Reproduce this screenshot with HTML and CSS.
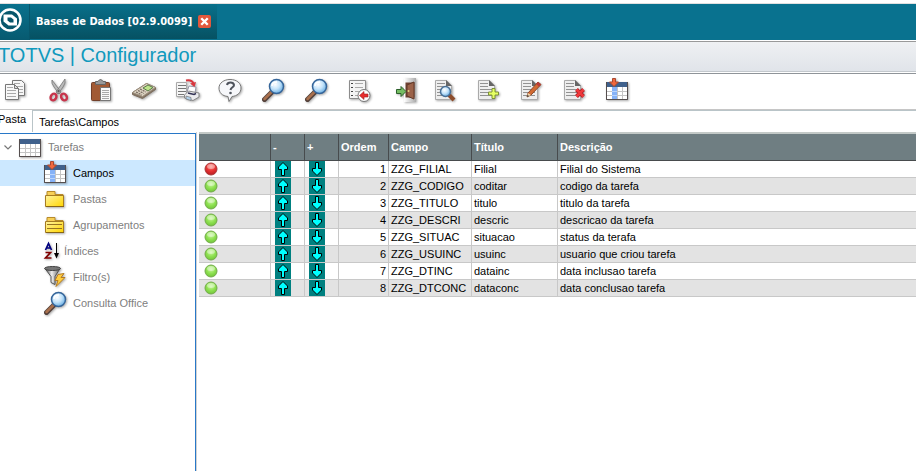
FILE: index.html
```html
<!DOCTYPE html>
<html lang="pt-BR">
<head>
<meta charset="utf-8">
<title>TOTVS | Configurador</title>
<link rel="stylesheet" href="styles.css">
</head>
<body>
<svg class="defs" aria-hidden="true">
  <defs>
    <radialGradient id="lens" cx=".4" cy=".35" r=".7"><stop offset="0" stop-color="#fff"/><stop offset=".5" stop-color="#c3e3fa"/><stop offset="1" stop-color="#5ea7df"/></radialGradient>
    <radialGradient id="red" cx=".5" cy=".3" r=".7"><stop offset="0" stop-color="#f98a80"/><stop offset=".5" stop-color="#ea3535"/><stop offset="1" stop-color="#b81d22"/></radialGradient>
    <radialGradient id="green" cx=".5" cy=".35" r=".7"><stop offset="0" stop-color="#c9f5a0"/><stop offset=".5" stop-color="#8fe252"/><stop offset="1" stop-color="#6cc036"/></radialGradient>
    <linearGradient id="fold" x2="1" y2="1"><stop offset="0" stop-color="#fff3a0"/><stop offset="1" stop-color="#ffd500"/></linearGradient>
    <linearGradient id="fade"><stop offset="0" stop-color="#fff"/><stop offset="1" stop-color="#aaa"/></linearGradient>
    <linearGradient id="metal"><stop offset="0" stop-color="#444"/><stop offset=".45" stop-color="#eee"/><stop offset="1" stop-color="#555"/></linearGradient>
    <symbol id="doc" viewBox="0 0 24 24"><path d="M2.5 2.5h11l5 5v14h-16z" fill="#eee" stroke="#aaa"/><path d="M13 2v6h6z" fill="#666"/><path d="M4 5.500h8M4 8.500h8M4 11.500h12M4 14.500h12M4 17.500h12" stroke="#929292"/></symbol>
    <symbol id="glass" viewBox="0 0 24 24"><path d="M3.500 21.500 11 14" stroke="#54413b" stroke-width="5" stroke-linecap="round"/><path d="M3.500 21 10.500 14" stroke="#a9704d" stroke-width="2.500" stroke-linecap="round"/><circle cx="15.500" cy="8.500" r="7" fill="url(#lens)" stroke="#35659a" stroke-width="1.500"/><path d="M11 8q0-4 5-4" fill="none" stroke="#fff" stroke-width="1.500"/></symbol>
    <symbol id="grid" viewBox="0 0 24 24"><path d="M1.500 4.500h21v17h-21z" fill="#fff" stroke="#615b5b"/><path d="M1 4h22v5H1z" fill="#40618c"/><path d="M2 13.500h20M2 17.500h20M7.500 9v12M12.500 9v12M17.500 9v12" stroke="#c4c4c4"/><path d="M1.500 4v17.500h21V4" fill="none" stroke="#554e4e"/></symbol>
    <symbol id="fields" viewBox="0 0 24 24"><use href="#grid"/><path d="M7 9h5v12H7z" fill="#86b2f7"/><path d="M7 13.500h5M7 17.500h5" stroke="#b9d5ff"/><path d="M7.500.5h3V4h3L9 8.500 4.500 4h3z" fill="#f1683d" stroke="#a94a32"/></symbol>
    <symbol id="folder" viewBox="0 0 24 24"><path d="M4 8.500v-4h8v3h8v3" fill="#f7cf57" stroke="#b88b2b"/><path d="M2.500 8.500h18v11h-18z" fill="url(#fold)" stroke="#a67c22"/><path d="M3 19.500h18" stroke="#886514"/></symbol>
    <symbol id="arrow" viewBox="0 0 16 16"><path d="M8 1.500 12.500 6v2.500h-3v6h-3v-6h-3V6z" fill="#0ff" stroke="#000"/></symbol>
    <symbol id="ball" viewBox="0 0 14 14"><ellipse cx="7" cy="4.500" rx="4" ry="2.500" fill="#fff" opacity=".4"/></symbol>
  </defs>
</svg>

<header class="topbar">
  <div class="brand"><svg class="logo" viewBox="0 0 24 24"><circle cx="12" cy="12" r="10.500" fill="#07566b" stroke="#fff" stroke-width="2.500"/><path d="M5.500 6.500h8.500l5 4v7h-8.500l-5-4z" fill="#fff"/><path d="M9.500 9.500H13l2.500 2v3H12l-2.500-2z" fill="#07556a"/></svg></div>
  <div class="tab"><span>Bases de Dados [02.9.0099]</span>
    <button class="close" aria-label="Fechar"><svg viewBox="0 0 12 12"><path d="m3 3 6 6m0-6-6 6" stroke="#fff" stroke-width="2.200"/></svg></button>
  </div>
</header>
<h1 class="title">TOTVS | Configurador</h1>

<nav class="toolbar" aria-label="Ferramentas">
  <button aria-label="Copiar"><svg viewBox="0 0 24 24"><path d="M9.500 2.500h9l3 3v12h-12z" fill="#f7f7f7" stroke="#777"/><path d="M11 5.500h6M11 8.500h9M11 11.500h9M11 14.500h9" stroke="#aaa"/><path d="M2.500 6.500h9l4 4v11h-13z" fill="#f8f8f8" stroke="#777"/><path d="M4 9.500h6M4 12.500h9M4 15.500h9M4 18.500h9" stroke="#aaa"/><path d="M11.500 6.500v4h4z" fill="#ddd" stroke="#777"/></svg></button>
  <button aria-label="Recortar"><svg viewBox="0 0 24 24"><path d="M6 2q-1 3 2 7l5 7 2-2zM19 1q1 4-2 8l-5 7-2-2z" fill="#bbb" stroke="#777" stroke-width=".8"/><circle cx="12.500" cy="13" r="1" fill="#555"/><g fill="none" stroke="#c8344b" stroke-width="2.500"><ellipse cx="7.500" cy="19" rx="2.700" ry="3.500" transform="rotate(30 7.500 19)"/><ellipse cx="18" cy="19" rx="2.700" ry="3.500" transform="rotate(-30 18 19)"/></g></svg></button>
  <button aria-label="Colar"><svg viewBox="0 0 24 24"><rect x="2.500" y="4.500" width="18" height="18" rx="1" fill="#a15a34" stroke="#72402a"/><path d="M6.500 6.500v-3H9q2.500-4 5 0h2.500v3z" fill="#999" stroke="#666"/><path d="M11.500 9.500h10v13h-10z" fill="#fafafa" stroke="#777"/><path d="M13 12.500h7M13 14.500h7M13 16.500h7M13 18.500h7M13 20.500h7" stroke="#aaa"/></svg></button>
  <button aria-label="Calculadora"><svg viewBox="0 0 24 24"><path d="m.5 14.500 14-9 9 4v2l-13 9-10-4z" fill="#857665" stroke="#7c6c5c"/><path d="m.5 14.500 14-9 9 4-13 9z" fill="#ddd3c2" stroke="#9b8e7d"/><path d="m11 10 5-3 5 2.500-5 3.500z" fill="#bee48b" stroke="#587a47"/><path d="m4 14 6 3M6 12.500l6 3M8 11l6 3" stroke="#776b60" stroke-width="1.200" stroke-dasharray="2 1"/></svg></button>
  <button aria-label="Imprimir"><svg viewBox="0 0 24 24"><path d="M1.500 4.500h10v14h-10z" fill="#f5f5f5" stroke="#aaa"/><path d="M3 7.500h8M3 10.500h8M3 13.500h8M3 16.500h6" stroke="#777"/><path d="m12 14 2-6 7 1-1 6z" fill="#fff" stroke="#99a"/><path d="m9.500 17 4-4 10.500 2v4l-6 3.500-8.500-2.500z" fill="#ececef" stroke="#888"/><path d="m13 15 6 1.500 2-1" stroke="#335" stroke-width="1.500" fill="none"/><path d="m11 18 5 1.500v3l-5-1.500z" fill="#b4d4ee" stroke="#777" stroke-width=".7"/><path d="M11 2.500q6-1 7.500 3" fill="none" stroke="#d9373f" stroke-width="2"/><path d="M15 5.500 21 4l-1.500 5z" fill="#d9373f"/></svg></button>
  <button aria-label="Ajuda"><svg viewBox="0 0 24 24"><path d="M12 1.500c7 0 11 4 11 8.500 0 5-4 8-9 8.500l-3 5-1-5C4 18 1 14.500 1 10c0-5 5-8.500 11-8.500z" fill="#f6f7fa" stroke="#777"/><path d="M9 7q.500-2.500 3.500-2.500T16 7c0 2.500-3 2-3.500 5" fill="none" stroke="#4e535c" stroke-width="2"/><circle cx="12.500" cy="15" r="1.300" fill="#4e535c"/></svg></button>
  <button aria-label="Pesquisar"><svg><use href="#glass"/></svg></button>
  <button aria-label="Localizar"><svg><use href="#glass"/></svg></button>
  <button aria-label="Voltar"><svg viewBox="0 0 24 24"><path d="M2.500 2.500h16v18h-16z" fill="#f4f4f4" stroke="#8c8c8c"/><path d="M4 5.500h2M4 9.500h2M4 13.500h2M4 17.500h2" stroke="#444"/><path d="M8 5.500h8M8 9.500h8M8 13.500h5M8 17.500h3" stroke="#aaa"/><circle cx="17" cy="17.500" r="6" fill="#fff" stroke="#777"/><path d="m12.500 17.500 4.500-4v2.500h4v3h-4v2.500z" fill="#e82d2d" stroke="#9c2023" stroke-width=".6"/></svg></button>
  <button aria-label="Sair"><svg viewBox="0 0 24 24"><path d="M14 0h12v24H14z" fill="url(#fade)"/><path d="M15.500 4.500h9v15h-9z" fill="#6e4132"/><path d="m17 7 7-3v17l-7-3z" fill="#9b6249" stroke="#613828"/><circle cx="18.500" cy="13" r="1" fill="#e6d282"/><path d="M6.500 11.500H11v-3l5 5-5 5v-3H6.500z" fill="#75bd63" stroke="#2c602b"/></svg></button>
  <button aria-label="Visualizar"><svg viewBox="0 0 24 24"><use href="#doc"/><path d="m16 17 5 5" stroke="#8d4d2c" stroke-width="4"/><circle cx="12.500" cy="13.500" r="5" fill="url(#lens)" stroke="#486f96" stroke-width="1.500"/></svg></button>
  <button aria-label="Incluir"><svg viewBox="0 0 24 24"><use href="#doc"/><path d="M16 10.500h3v3.500h3.500v3H19v3.500h-3V17h-3.500v-3H16z" fill="#e5ff63" stroke="#7d9138"/></svg></button>
  <button aria-label="Alterar"><svg viewBox="0 0 24 24"><use href="#doc"/><path d="m8 19 1-4L19 4l3 2.500L12 17z" fill="#d26a32" stroke="#8e4929"/><path d="m8 19 1-4 3 2z" fill="#efd6ad"/><path d="m17 6 3 2.500 2-2L19 4z" fill="#bd3b39"/><path d="m8 19 .5-2 1.500 1z" fill="#222"/></svg></button>
  <button aria-label="Excluir"><svg viewBox="0 0 24 24"><use href="#doc"/><path d="m14.500 11.500 7 7m0-7-7 7" stroke="#a51e22" stroke-width="4"/><path d="m14.500 11.500 7 7m0-7-7 7" stroke="#f0383b" stroke-width="2.500"/></svg></button>
  <button aria-label="Campos"><svg><use href="#fields"/></svg></button>
</nav>

<div class="path">
  <label for="pasta">Pasta</label>
  <input id="pasta" value="Tarefas\Campos">
</div>

<main class="work">
  <nav class="tree" aria-label="Pastas">
    <a class="root" href="#tarefas"><svg class="chevron" viewBox="0 0 8 8"><path d="m.5 2.500 3.500 3.500L7.500 2.500" fill="none" stroke="#777" stroke-width="1.200"/></svg><svg class="icon"><use href="#grid"/></svg><span>Tarefas</span></a>
    <a class="selected" href="#campos"><svg class="icon"><use href="#fields"/></svg><span>Campos</span></a>
    <a href="#pastas"><svg class="icon"><use href="#folder"/></svg><span>Pastas</span></a>
    <a href="#agrupamentos"><svg class="icon" viewBox="0 0 24 24"><use href="#folder"/><path d="M4 11.500h15M4 15.500h15" stroke="#987322"/></svg><span>Agrupamentos</span></a>
    <a href="#indices"><svg class="icon small" viewBox="0 0 16 24"><g fill="none" stroke-width="1.700"><path d="m2.500 11 3-6.500 3 6.500M3.500 9h4" stroke="#000080"/><path d="M2.500 13.500h5l-5 5.500H8.500" stroke="#800000"/></g><path d="M13.500 4v14" stroke="#000"/><path d="M11 14h5l-2.500 5.500z"/></svg><span>Índices</span></a>
    <a href="#filtros"><svg class="icon" viewBox="0 0 24 24"><path d="m2 3.500 6 8v6l4 2v-8l5-8z" fill="url(#metal)" stroke="#555"/><ellipse cx="9.500" cy="3.500" rx="8" ry="2" fill="#777" stroke="#444"/><path d="m15 9.500 6-1-3 4h4l-9 9 2-6h-3z" fill="#ffcd3e" stroke="#b37a20"/></svg><span>Filtro(s)</span></a>
    <a href="#consulta"><svg class="icon"><use href="#glass"/></svg><span>Consulta Office</span></a>
  </nav>
  <section class="content">
    <table>
      <colgroup><col class="c-status"><col class="c-move"><col class="c-move"><col class="c-order"><col class="c-field"><col class="c-title"><col></colgroup>
      <thead><tr><th aria-label="Status"></th><th>-</th><th>+</th><th>Ordem</th><th>Campo</th><th>Título</th><th>Descrição</th></tr></thead>
      <tbody id="rows"></tbody>
    </table>
  </section>
</main>
<script src="app.js"></script>
</body>
</html>
```
FILE: styles.css
```css
* { box-sizing: border-box; }
body {
  margin: 0;
  min-height: 100vh;
  display: flex;
  flex-direction: column;
  overflow: hidden;
  background: #fff;
  color: #000;
  font: 11px/16px "Liberation Sans", Arial, sans-serif;
}
.defs { position: absolute; width: 0; height: 0; }
svg { display: block; overflow: visible; }
button { padding: 0; border: 0; background: none; font: inherit; }

.topbar {
  display: flex;
  height: 37px;
  margin-top: 3px;
  border-top: 1px solid #e0e0e0;
  background: #09728f;
}
.brand {
  width: 30px;
  border-right: 1px solid #07566b;
  background: linear-gradient(#09718d, #075a70);
}
.logo { width: 24px; height: 24px; margin: 4px 0 0 -2px; }
.tab {
  display: flex;
  align-items: center;
  gap: 6px;
  height: 35px;
  padding: 0 6px;
  background: linear-gradient(#08708b, #065162);
  color: #fff;
  font: bold 11px/16px "DejaVu Sans Condensed", Verdana, sans-serif;
}
.close {
  width: 13px;
  height: 13px;
  border-radius: 2px;
  background: #e2583c;
}
.title {
  height: 34px;
  margin: 0;
  border-top: 1px solid #fff;
  border-bottom: 1px solid #8f9499;
  box-shadow: inset 0 1px #999, inset 0 -1px #fff, inset 0 -2px #c3c8cd;
  background: linear-gradient(#eff1f3, #dfe3e9);
  color: #1199bd;
  font: 20px/28px "Liberation Sans", Arial, sans-serif;
  text-indent: -2px;
}

.toolbar {
  display: flex;
  gap: 19px;
  height: 36px;
  padding: 4px 3px;
  border-bottom: 1px solid #c6c6c6;
}
.toolbar button, .toolbar svg, .icon { width: 24px; height: 24px; }
.toolbar svg, .icon { filter: drop-shadow(1px 1px 1px #0005); }

.path { display: flex; height: 22px; }
.path label { width: 34px; margin-left: -2px; padding-top: 1px; }
.path input {
  flex: 1;
  min-width: 0;
  padding: 0 6px;
  border: solid #b9c4c8;
  border-width: 1px 0 0 1px;
  background: #fff;
  color: #000;
  font: inherit;
}

.work { display: flex; flex: 1; }
.tree {
  width: 196px;
  flex: none;
  margin-top: 1px;
  border: solid #2878c8;
  border-width: 1px 1px 0 0;
}
.tree a {
  display: flex;
  align-items: center;
  gap: 6px;
  height: 26px;
  padding-left: 43px;
  color: #808080;
  text-decoration: none;
}
.tree .root { padding-left: 4px; }
.tree .selected { background: #cce8ff; color: #000; }
.chevron { width: 8px; height: 8px; }
.icon.small { width: 16px; margin-right: -1px; }

.content {
  flex: 1;
  min-width: 0;
  padding-left: 2px;
  border-left: 1px solid #d2d2d2;
}
table {
  width: 100%;
  border-collapse: separate;
  border-spacing: 0;
  table-layout: fixed;
  border-top: 2px solid #c3c9c7;
}
.c-status { width: 72px; }
.c-move { width: 34px; }
.c-order { width: 50px; }
.c-field { width: 83px; }
.c-title { width: 86px; }
th, td {
  padding: 0 2px;
  border: solid #c8c8c8;
  border-width: 0 1px 1px 0;
  text-align: left;
  white-space: nowrap;
}
th {
  height: 27px;
  border-color: #474b4d;
  background: #6f7e82;
  color: #fff;
}
td { height: 17px; line-height: 16px; }
th:last-child, td:last-child { border-right: 0; }
tbody tr:nth-child(even) { background: #e3e3e3; }
.order { text-align: right; }
.status { padding-left: 5px; }
.status svg { width: 14px; height: 14px; }
.move { padding-left: 4px; }
.move button { display: block; width: 16px; height: 16px; background: #008080; }
.move svg { width: 16px; height: 16px; }
```
FILE: app.js
```js
const rows = [
  ["ZZG_FILIAL", "Filial", "Filial do Sistema"],
  ["ZZG_CODIGO", "coditar", "codigo da tarefa"],
  ["ZZG_TITULO", "titulo", "titulo da tarefa"],
  ["ZZG_DESCRI", "descric", "descricao da tarefa"],
  ["ZZG_SITUAC", "situacao", "status da terafa"],
  ["ZZG_USUINC", "usuinc", "usuario que criou tarefa"],
  ["ZZG_DTINC", "datainc", "data inclusao tarefa"],
  ["ZZG_DTCONC", "dataconc", "data conclusao tarefa"]
];

document.getElementById("rows").innerHTML = rows.map(([field, title, text], i) => `
  <tr>
    <td class="status"><svg viewBox="0 0 14 14"><circle cx="7" cy="7" r="6" fill="url(#${i ? "green" : "red"})" stroke="${i ? "#74aa4c" : "#aa3838"}"/><use href="#ball"/></svg></td>
    <td class="move"><button aria-label="Subir"><svg><use href="#arrow"/></svg></button></td>
    <td class="move"><button aria-label="Descer"><svg viewBox="0 0 16 16"><g transform="rotate(180 8 8)"><use href="#arrow" width="16" height="16"/></g></svg></button></td>
    <td class="order">${i + 1}</td>
    <td>${field}</td>
    <td>${title}</td>
    <td>${text}</td>
  </tr>`).join("");
```
